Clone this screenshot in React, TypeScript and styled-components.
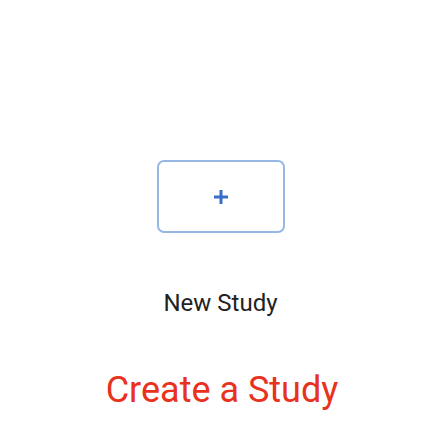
import styled, { createGlobalStyle } from "styled-components";

const GlobalStyle = createGlobalStyle`
    html, body {
        margin: 0;
        padding: 0;
        background: #fff;
        font-family: Roboto, "Liberation Sans", sans-serif;
    }
`;

const Page = styled.div`
    display: flex;
    flex-direction: column;
    align-items: center;
    width: 446px;
    height: 438px;
    padding: 160px 5px 0 0;
    box-sizing: border-box;
`;

const AddButton = styled.button`
    display: flex;
    align-items: center;
    justify-content: center;
    width: 128px;
    height: 73px;
    border: 2px solid #97b7e6;
    border-radius: 7px;
    background: #fff;
    cursor: pointer;
    padding: 0;
`;

const Label = styled.div`
    margin-top: 56px;
    font-size: 24px;
    color: #222;
    line-height: 28px;
`;

const Title = styled.div`
    margin-top: 52px;
    margin-left: 3px;
    font-size: 36px;
    color: #e8321e;
    line-height: 42px;
`;

function PlusIcon() {
    return (
        <svg width="16" height="16" viewBox="0 0 16 16">
            <path d="M8 1v14M1 8h14" stroke="#3a6fc8" strokeWidth="3" />
        </svg>
    );
}

function App() {
    return (
        <Page>
            <GlobalStyle />
            <AddButton>
                <PlusIcon />
            </AddButton>
            <Label>New Study</Label>
            <Title>Create a Study</Title>
        </Page>
    );
}

export default App;
